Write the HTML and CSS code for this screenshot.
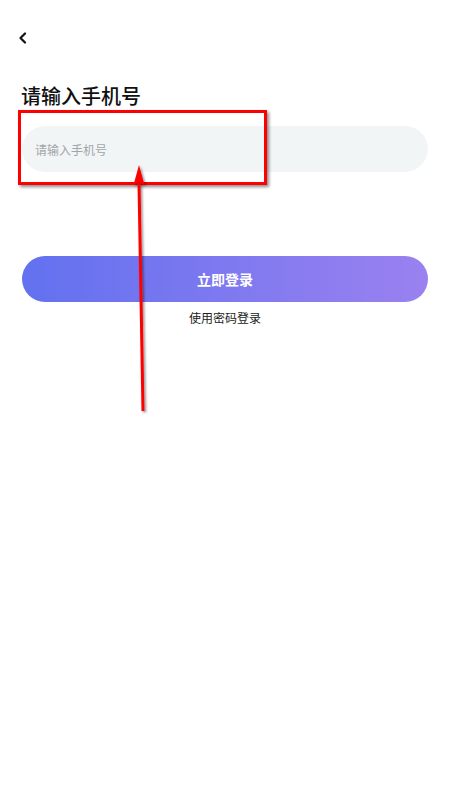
FILE: index.html
```html
<!DOCTYPE html>
<html lang="zh-CN">
<head>
    <meta charset="UTF-8">
    <meta name="viewport" content="width=device-width, initial-scale=1.0">
    <title>手机号登录</title>
    <link rel="stylesheet" href="styles.css">
</head>
<body>
    <div class="page">
        <div class="nav-bar">
            <svg class="back-icon" width="10" height="12" viewBox="0 0 10 12">
                <path d="M7 1.5 L2.5 6 L7 10.5" fill="none" stroke="#111" stroke-width="2.2" stroke-linecap="round" stroke-linejoin="round"/>
            </svg>
        </div>

        <h1 class="page-title">请输入手机号</h1>

        <div class="phone-field">
            <input class="phone-input" type="tel" placeholder="请输入手机号">
        </div>

        <button class="login-btn">立即登录</button>
        <div class="switch-link">使用密码登录</div>
    </div>

    <!-- 标注 -->
    <div class="mark-box"></div>
    <svg class="mark-arrow" width="40" height="260" viewBox="0 0 40 260">
        <g filter="url(#shade)">
            <line x1="19" y1="18" x2="23" y2="246" stroke="#f00" stroke-width="3"/>
            <path d="M19 0 L24.5 20 L19 17 L13.5 20 Z" fill="#f00"/>
        </g>
        <defs>
            <filter id="shade" x="-50%" y="-10%" width="200%" height="120%">
                <feDropShadow dx="1.5" dy="1.5" stdDeviation="1" flood-color="#000" flood-opacity="0.45"/>
            </filter>
        </defs>
    </svg>
</body>
</html>
```

FILE: styles.css
```css
* {
    box-sizing: border-box;
    margin: 0;
    padding: 0;
}

body {
    background: #fff;
    font-family: "Noto Sans CJK SC", "Noto Sans", sans-serif;
    color: #111;
    width: 450px;
    min-height: 800px;
    position: relative;
}

.page {
    padding: 0 22px;
}

.nav-bar {
    height: 82px;
    padding-top: 32px;
}

.back-icon {
    display: block;
    margin-left: -4px;
}

.page-title {
    font-size: 20px;
    font-weight: 500;
    line-height: 28px;
    margin-left: -1px;
    margin-bottom: 16px;
}

.phone-field {
    height: 46px;
    border-radius: 23px;
    background: #f2f5f6;
    display: flex;
    align-items: center;
    padding: 0 13px;
}

.phone-input {
    border: none;
    outline: none;
    background: transparent;
    width: 100%;
    font-family: inherit;
    font-size: 12px;
    color: #333;
}

.phone-input::placeholder {
    color: #a3a6a8;
}

.login-btn {
    display: block;
    width: 100%;
    height: 46px;
    margin-top: 84px;
    border: none;
    border-radius: 23px;
    background: linear-gradient(90deg, #6271ef, #9a81f0);
    color: #fff;
    font-family: inherit;
    font-size: 14px;
    font-weight: 700;
}

.switch-link {
    text-align: center;
    font-size: 12px;
    color: #222;
    margin-top: 7px;
    line-height: 18px;
}

.mark-box {
    position: absolute;
    left: 18px;
    top: 110px;
    width: 249px;
    height: 75px;
    border: 3px solid #f00;
    box-shadow: 2px 2px 3px rgba(0,0,0,0.45);
}

.mark-arrow {
    position: absolute;
    left: 120px;
    top: 165px;
}
```
